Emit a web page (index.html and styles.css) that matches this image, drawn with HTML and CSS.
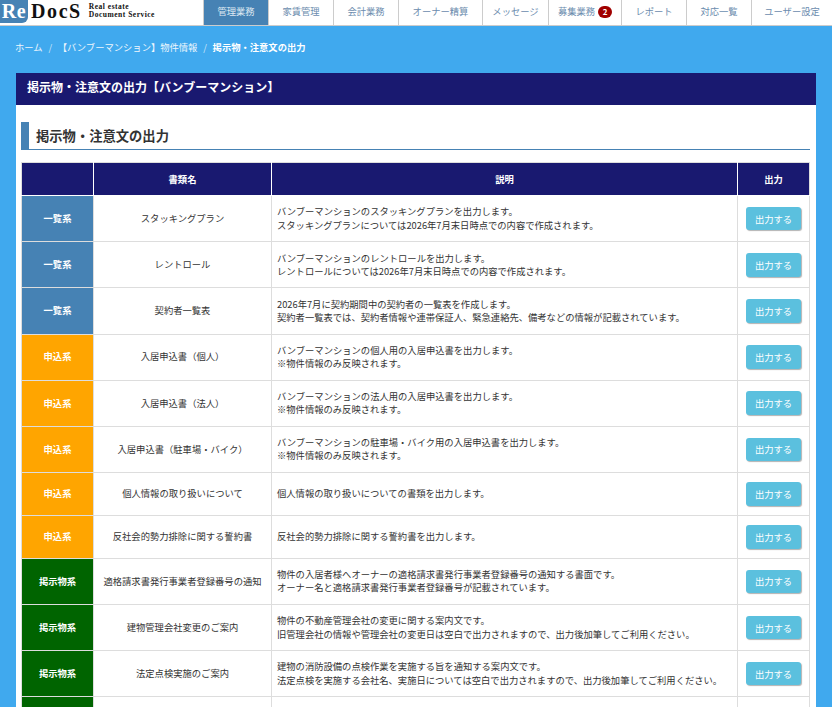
FILE: index.html
```html
<!DOCTYPE html>
<html lang="ja">
<head>
    <meta charset="UTF-8">
    <meta name="viewport" content="width=device-width, initial-scale=1.0">
    <title>掲示物・注意文の出力</title>
    <link rel="stylesheet" href="styles.css">
</head>
<body>
    <header class="site-header">
        <a class="logo" href="#">
            <span class="logo-re">Re</span>
            <span class="logo-docs">DocS</span>
            <span class="logo-sub">Real estate<br>Document Service</span>
        </a>
        <nav class="main-nav">
            <a href="#" class="active">管理業務</a>
            <a href="#">家賃管理</a>
            <a href="#">会計業務</a>
            <a href="#">オーナー精算</a>
            <a href="#">メッセージ</a>
            <a href="#">募集業務<span class="badge">2</span></a>
            <a href="#">レポート</a>
            <a href="#">対応一覧</a>
            <a href="#">ユーザー設定</a>
        </nav>
    </header>

    <ol class="breadcrumb">
        <li><a href="#">ホーム</a></li>
        <li><a href="#">【バンブーマンション】物件情報</a></li>
        <li class="current">掲示物・注意文の出力</li>
    </ol>

    <main class="panel">
        <h1 class="panel-title">掲示物・注意文の出力【バンブーマンション】</h1>
        <div class="panel-body">
            <h2 class="section-title">掲示物・注意文の出力</h2>
            <table class="doc-table">
                <colgroup>
                    <col class="col-type">
                    <col class="col-name">
                    <col class="col-desc">
                    <col class="col-action">
                </colgroup>
                <thead>
                    <tr>
                        <th></th>
                        <th>書類名</th>
                        <th>説明</th>
                        <th>出力</th>
                    </tr>
                </thead>
                <tbody>
                    <tr>
                        <td class="type type-list">一覧系</td>
                        <td class="name">スタッキングプラン</td>
                        <td>バンブーマンションのスタッキングプランを出力します。<br>スタッキングプランについては2026年7月末日時点での内容で作成されます。</td>
                        <td class="action"><button class="btn">出力する</button></td>
                    </tr>
                    <tr>
                        <td class="type type-list">一覧系</td>
                        <td class="name">レントロール</td>
                        <td>バンブーマンションのレントロールを出力します。<br>レントロールについては2026年7月末日時点での内容で作成されます。</td>
                        <td class="action"><button class="btn">出力する</button></td>
                    </tr>
                    <tr>
                        <td class="type type-list">一覧系</td>
                        <td class="name">契約者一覧表</td>
                        <td>2026年7月に契約期間中の契約者の一覧表を作成します。<br>契約者一覧表では、契約者情報や連帯保証人、緊急連絡先、備考などの情報が記載されています。</td>
                        <td class="action"><button class="btn">出力する</button></td>
                    </tr>
                    <tr>
                        <td class="type type-apply">申込系</td>
                        <td class="name">入居申込書（個人）</td>
                        <td>バンブーマンションの個人用の入居申込書を出力します。<br>※物件情報のみ反映されます。</td>
                        <td class="action"><button class="btn">出力する</button></td>
                    </tr>
                    <tr>
                        <td class="type type-apply">申込系</td>
                        <td class="name">入居申込書（法人）</td>
                        <td>バンブーマンションの法人用の入居申込書を出力します。<br>※物件情報のみ反映されます。</td>
                        <td class="action"><button class="btn">出力する</button></td>
                    </tr>
                    <tr>
                        <td class="type type-apply">申込系</td>
                        <td class="name">入居申込書（駐車場・バイク）</td>
                        <td>バンブーマンションの駐車場・バイク用の入居申込書を出力します。<br>※物件情報のみ反映されます。</td>
                        <td class="action"><button class="btn">出力する</button></td>
                    </tr>
                    <tr>
                        <td class="type type-apply">申込系</td>
                        <td class="name">個人情報の取り扱いについて</td>
                        <td>個人情報の取り扱いについての書類を出力します。</td>
                        <td class="action"><button class="btn">出力する</button></td>
                    </tr>
                    <tr>
                        <td class="type type-apply">申込系</td>
                        <td class="name">反社会的勢力排除に関する誓約書</td>
                        <td>反社会的勢力排除に関する誓約書を出力します。</td>
                        <td class="action"><button class="btn">出力する</button></td>
                    </tr>
                    <tr>
                        <td class="type type-notice">掲示物系</td>
                        <td class="name">適格請求書発行事業者登録番号の通知</td>
                        <td>物件の入居者様へオーナーの適格請求書発行事業者登録番号の通知する書面です。<br>オーナー名と適格請求書発行事業者登録番号が記載されています。</td>
                        <td class="action"><button class="btn">出力する</button></td>
                    </tr>
                    <tr>
                        <td class="type type-notice">掲示物系</td>
                        <td class="name">建物管理会社変更のご案内</td>
                        <td>物件の不動産管理会社の変更に関する案内文です。<br>旧管理会社の情報や管理会社の変更日は空白で出力されますので、出力後加筆してご利用ください。</td>
                        <td class="action"><button class="btn">出力する</button></td>
                    </tr>
                    <tr>
                        <td class="type type-notice">掲示物系</td>
                        <td class="name">法定点検実施のご案内</td>
                        <td>建物の消防設備の点検作業を実施する旨を通知する案内文です。<br>法定点検を実施する会社名、実施日については空白で出力されますので、出力後加筆してご利用ください。</td>
                        <td class="action"><button class="btn">出力する</button></td>
                    </tr>
                    <tr>
                        <td class="type type-notice"></td>
                        <td class="name"></td>
                        <td><br><br></td>
                        <td class="action"></td>
                    </tr>
                </tbody>
            </table>
        </div>
    </main>
</body>
</html>
```

FILE: styles.css
```css
html, body {
    height: 707px;
    overflow: hidden;
}
body {
    margin: 0;
    font-family: "Noto Sans CJK JP", "Liberation Sans", sans-serif;
    font-size: 9.3px;
    line-height: 1.42857;
    color: #333;
    background-color: #40a9ee;
}
a {
    text-decoration: none;
}

/* header */
.site-header {
    display: flex;
    height: 25px;
    background-color: white;
    border-bottom: 1px solid #ccc;
}
.logo {
    display: flex;
    align-items: flex-start;
    width: 203px;
    color: #111;
    font-family: "Liberation Serif", serif;
    font-weight: bold;
}
.logo-re {
    width: 28px;
    height: 23px;
    background-color: #4682b4;
    border-bottom-right-radius: 6px;
    color: white;
    font-size: 20px;
    line-height: 23px;
    letter-spacing: 0.5px;
    text-align: center;
}
.logo-docs {
    margin-left: 3px;
    font-size: 20px;
    line-height: 23px;
    letter-spacing: 1.6px;
}
.logo-sub {
    margin: 2.5px 0 0 7px;
    font-size: 7.5px;
    line-height: 8px;
    letter-spacing: 0.5px;
    white-space: nowrap;
}
.main-nav {
    flex: 1;
    display: grid;
    grid-template-columns: 65px 65px 65px 84px 66px 73px 65px 65px 1fr;
}
.main-nav a {
    display: flex;
    justify-content: center;
    align-items: center;
    padding-bottom: 2px;
    color: #6b8cae;
    border-left: 1px solid #ccc;
}
.main-nav a.active {
    background-color: #4682b4;
    color: #dfe9f2;
}
.badge {
    width: 14px;
    height: 12px;
    margin-left: 3px;
    border-radius: 6px;
    background-color: #a00000;
    color: white;
    font-size: 8px;
    font-weight: bold;
    line-height: 12px;
    text-align: center;
}

/* breadcrumb */
.breadcrumb {
    display: flex;
    margin: 0;
    padding: 15px 15px 19px;
    list-style: none;
    color: white;
}
.breadcrumb a {
    color: #eef6fd;
}
.breadcrumb li + li::before {
    content: "/";
    padding: 0 5.75px;
    color: #cfe6f8;
    font-weight: normal;
}
.breadcrumb .current {
    font-weight: bold;
}

/* panel */
.panel {
    margin: 0 16px;
    background-color: white;
}
.panel-title {
    margin: 0;
    padding: 4px 11px 8px;
    background-color: #191970;
    color: white;
    font-size: 12px;
    line-height: 20px;
}
.panel-body {
    padding: 17px 6px 0 5px;
}
.section-title {
    margin: 0 0 12px;
    padding: 0 7px;
    border-left: 8px solid #4682b4;
    border-bottom: 1px solid #4682b4;
    color: #333;
    font-size: 13.3px;
    line-height: 27px;
}

/* table */
.doc-table {
    width: 100%;
    table-layout: fixed;
    border-collapse: collapse;
}
.col-type {
    width: 72px;
}
.col-name {
    width: 178px;
}
.col-action {
    width: 72px;
}
.doc-table th,
.doc-table td {
    padding: 9.3px 5px;
    border: 1px solid #ddd;
    vertical-align: middle;
}
.doc-table th {
    background-color: #191970;
    color: white;
    border-color: white;
    text-align: center;
}
.doc-table thead tr th {
    border-top-color: #ddd;
}
.doc-table th:first-child {
    border-left-color: #ddd;
}
.doc-table th:last-child {
    border-right-color: #ddd;
}
.doc-table .type {
    color: white;
    font-weight: bold;
    text-align: center;
}
.type-list {
    background-color: #4682b4;
}
.type-apply {
    background-color: #ffa500;
}
.type-notice {
    background-color: #006400;
}
.doc-table .name,
.doc-table .action {
    text-align: center;
}
.btn {
    display: inline-block;
    width: 55px;
    height: 23.4px;
    padding: 0;
    border: none;
    border-radius: 3px;
    background-color: #5bc0de;
    box-shadow: 1px 1px 1px rgba(0, 0, 0, 0.3);
    color: white;
    font-family: inherit;
    font-size: 9.3px;
    cursor: pointer;
}
```
